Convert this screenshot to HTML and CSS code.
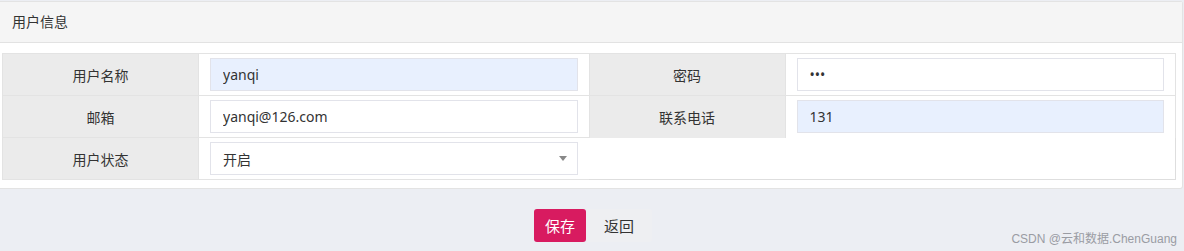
FILE: index.html
```html
<!DOCTYPE html>
<html lang="zh-CN">
<head>
    <meta charset="UTF-8">
    <meta name="viewport" content="width=device-width, initial-scale=1.0">
    <title>用户信息</title>
    <link rel="stylesheet" href="styles.css">
</head>
<body>
    <!-- User info panel -->
    <div class="panel">
        <div class="panel-heading">用户信息</div>
        <div class="panel-body">
            <table class="form-table">
                <tr>
                    <td class="label">用户名称</td>
                    <td class="field"><input class="input autofill" type="text" value="yanqi"></td>
                    <td class="label">密码</td>
                    <td class="field"><input class="input" type="password" value="123"></td>
                </tr>
                <tr>
                    <td class="label">邮箱</td>
                    <td class="field"><input class="input" type="text" value="yanqi@126.com"></td>
                    <td class="label">联系电话</td>
                    <td class="field"><input class="input autofill" type="text" value="131"></td>
                </tr>
                <tr>
                    <td class="label">用户状态</td>
                    <td class="field">
                        <div class="select">
                            <span>开启</span>
                            <span class="caret"></span>
                        </div>
                    </td>
                    <td class="empty" colspan="2"></td>
                </tr>
            </table>
        </div>
    </div>

    <!-- Actions -->
    <div class="actions">
        <button class="btn btn-save">保存</button>
        <button class="btn btn-back">返回</button>
    </div>

    <div class="watermark">CSDN @云和数据.ChenGuang</div>
</body>
</html>
```

FILE: styles.css
```css
body {
    margin: 0;
    padding-top: 1px;
    background: #eceef3;
    font-family: "Noto Sans", "Noto Sans CJK SC", sans-serif;
    font-size: 14px;
    color: #333;
    position: relative;
    height: 250px;
}

.panel {
    width: 1182px;
    background: white;
    border: 1px solid #e3e3e3;
    border-left: none;
    border-radius: 0 3px 3px 0;
}

.panel-heading {
    height: 40px;
    line-height: 40px;
    padding-left: 12px;
    background: #f5f5f5;
    border-bottom: 1px solid #e2e2e2;
}

.panel-body {
    padding: 10px 6px 8px 2px;
}

.form-table {
    width: 100%;
    border-collapse: collapse;
    border: 1px solid #dedede;
}

.form-table td {
    height: 41px;
    padding: 0;
    border: 1px solid #e3e3e3;
}

.label {
    width: 195px;
    background: #ebebeb;
    text-align: center;
}

.field {
    padding: 0 11px !important;
}

.form-table td.empty {
    border-top: hidden;
    border-left: hidden;
    border-right: 1px solid #dedede;
    border-bottom: 1px solid #dedede;
}

.input {
    display: block;
    box-sizing: border-box;
    width: 100%;
    height: 33px;
    padding: 0 12px;
    border: 1px solid #e2e3ea;
    background: white;
    font-family: inherit;
    font-size: 14px;
    color: #333;
    outline: none;
}

.input.autofill {
    background: #e8f0fe;
}

.select {
    box-sizing: border-box;
    height: 33px;
    padding: 0 12px;
    border: 1px solid #e2e3ea;
    display: flex;
    align-items: center;
    justify-content: space-between;
}

.caret {
    width: 0;
    height: 0;
    border-left: 4px solid transparent;
    border-right: 4px solid transparent;
    border-top: 5px solid #888;
    margin-right: -2px;
}

.actions {
    display: flex;
    justify-content: center;
    margin-top: 20px;
    margin-left: 2px;
}

.btn {
    height: 33px;
    padding: 0 11px;
    border: none;
    border-radius: 3px;
    font-family: inherit;
    font-size: 15px;
    cursor: pointer;
}

.btn-save {
    background: #d81b60;
    color: white;
}

.btn-back {
    background: #eeeff2;
    color: #333;
    padding: 0 18px;
}

.watermark {
    position: absolute;
    right: 7px;
    bottom: 5px;
    font-family: "Liberation Sans", "Noto Sans CJK SC", sans-serif;
    font-size: 12px;
    color: #9a9ca3;
}
```
